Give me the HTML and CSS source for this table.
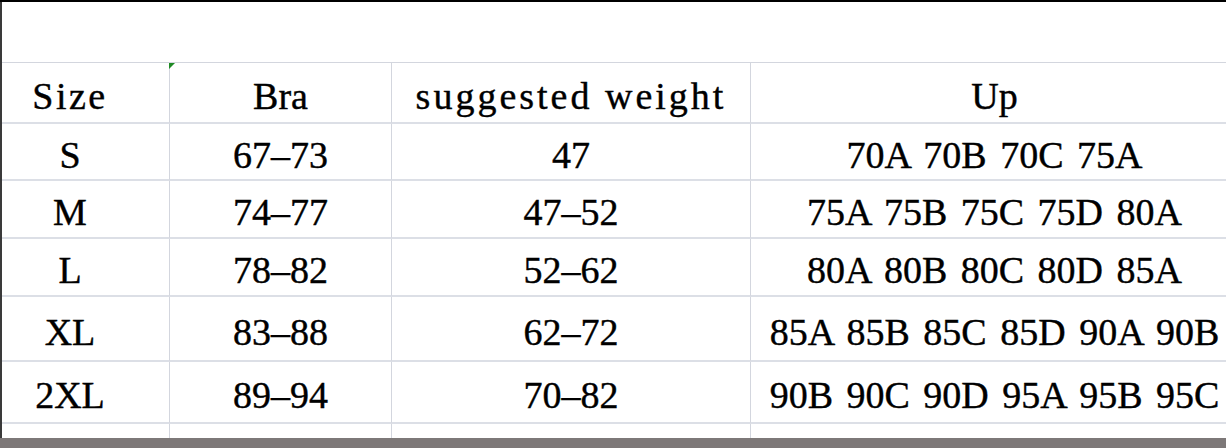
FILE: index.html
```html
<!DOCTYPE html>
<html lang="en">
<head>
<meta charset="utf-8">
<title>Size chart</title>
<link rel="stylesheet" href="styles.css">
</head>
<body>
<div class="screen">
  <div class="sheet">
    <div class="blank"></div>
    <div class="grid">
      <div class="cell head wide">Size</div>
      <div class="cell head marked">Bra</div>
      <div class="cell head wider">suggested weight</div>
      <div class="cell head">Up</div>

      <div class="cell">S</div>
      <div class="cell">67–73</div>
      <div class="cell">47</div>
      <div class="cell codes">70A 70B 70C 75A</div>

      <div class="cell">M</div>
      <div class="cell">74–77</div>
      <div class="cell">47–52</div>
      <div class="cell codes">75A 75B 75C 75D 80A</div>

      <div class="cell">L</div>
      <div class="cell">78–82</div>
      <div class="cell">52–62</div>
      <div class="cell codes">80A 80B 80C 80D 85A</div>

      <div class="cell">XL</div>
      <div class="cell">83–88</div>
      <div class="cell">62–72</div>
      <div class="cell codes">85A 85B 85C 85D 90A 90B</div>

      <div class="cell">2XL</div>
      <div class="cell">89–94</div>
      <div class="cell">70–82</div>
      <div class="cell codes">90B 90C 90D 95A 95B 95C</div>

      <div class="cell empty"></div>
      <div class="cell empty"></div>
      <div class="cell empty"></div>
      <div class="cell empty"></div>
    </div>
  </div>
  <div class="bar"></div>
</div>
</body>
</html>
```
FILE: styles.css
```css
html, body {
  margin: 0;
  padding: 0;
  background: #ffffff;
  overflow: hidden;
}

.screen {
  width: 1226px;
  height: 448px;
  overflow: hidden;
  display: flex;
  flex-direction: column;
  box-sizing: border-box;
  border-top: 2px solid #000000;
}

.sheet {
  flex: 0 0 436px;
  overflow: hidden;
  display: flex;
  flex-direction: column;
  border-left: 2px solid #3a3a3a;
  background: #ffffff;
}

.blank {
  flex: 0 0 60px;
}

.grid {
  flex: 1 1 0;
  min-height: 0;
  display: grid;
  grid-template-columns: 199px 222px 359px 488px;
  grid-template-rows: 61px 57px 58px 58px 65px 62px 1fr;
  margin-left: -31px;
  border-top: 1px solid #d3d6de;
  font-family: "Liberation Serif", "Times New Roman", serif;
  font-size: 38px;
  color: #000000;
  -webkit-text-stroke: 0.4px #000000;
}

.cell {
  box-sizing: border-box;
  border-right: 1px solid #d3d6de;
  border-bottom: 2px solid #dcdfe6;
  display: flex;
  align-items: center;
  justify-content: center;
  padding-top: 6px;
  line-height: 1;
  white-space: nowrap;
  overflow: visible;
}

.head.wide {
  letter-spacing: 2.5px;
}

.head.wider {
  letter-spacing: 3px;
}

.marked {
  position: relative;
}

.marked::before {
  content: "";
  position: absolute;
  top: 0;
  left: -1px;
  width: 0;
  height: 0;
  border-top: 6px solid #1f8a24;
  border-right: 6px solid transparent;
}

.codes {
  word-spacing: 4px;
}

.empty {
  border-bottom: none;
  padding-top: 0;
  min-height: 0;
}

.bar {
  flex: 0 0 10px;
  background: #7d7878;
}
```
